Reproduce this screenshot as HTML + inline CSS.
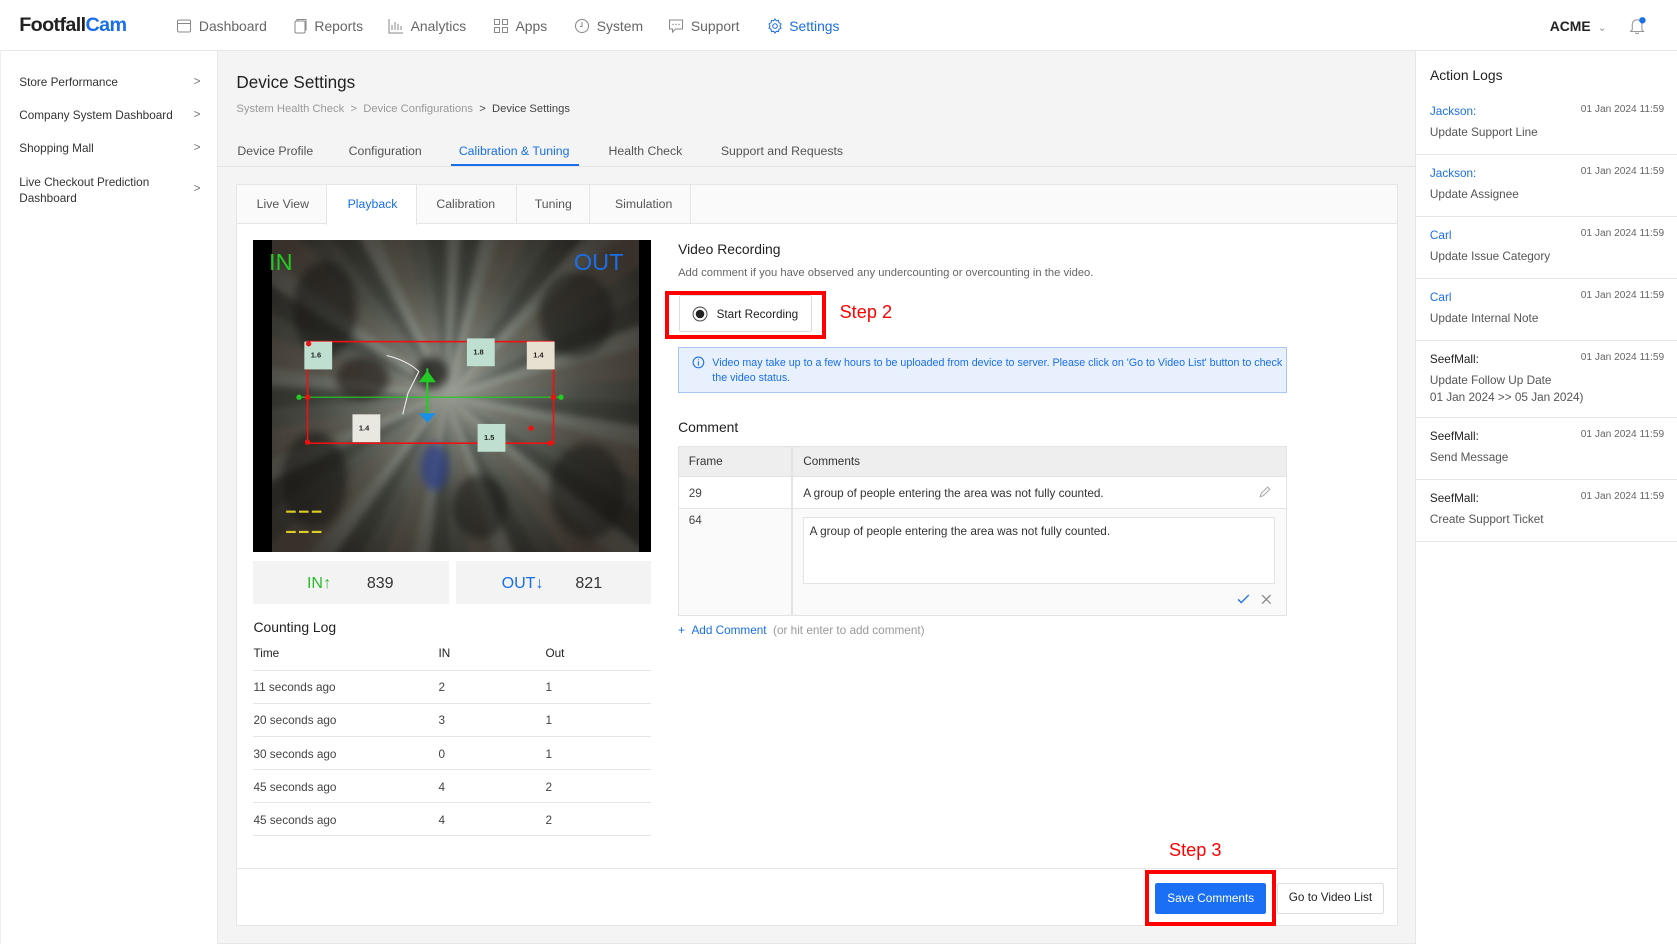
<!DOCTYPE html>
<html><head><meta charset="utf-8"><style>
*{box-sizing:border-box;margin:0;padding:0}
html,body{width:1677px;height:944px;overflow:hidden;background:#fff}
#r{zoom:1.06952;position:relative;width:1568px;height:883px;font-family:"Liberation Sans",sans-serif;color:#333;font-size:11px;overflow:hidden}
.a{position:absolute;white-space:nowrap}
.nav{top:17px;font-size:13px;color:#666;display:flex;align-items:center;gap:6px}
.nav svg{width:15px;height:15px}
.blue{color:#1a6fe8}
.side{left:18px;font-size:11px;color:#333}
.chev{left:181px;color:#777;font-size:11px}
.log{left:1324px;width:244px;height:58px;border-bottom:1px solid #e6e6e6}
.log .n{position:absolute;left:13px;top:11px;font-size:11px;color:#1a6fe8}
.log .d{position:absolute;right:12px;top:10px;font-size:9.5px;color:#666}
.log .t{position:absolute;left:13px;top:29px;font-size:11px;color:#555;line-height:16px}
.row{left:237px;width:372px;height:31px;border-bottom:1px solid #e5e5e5;font-size:11px;color:#444}
.row span{position:absolute;top:10px}
.b{position:absolute;border-radius:50%;filter:blur(4px)}
</style></head><body><div id="r">
<div class="a" style="left:0;top:0;width:1568px;height:48px;border-bottom:1px solid #e8e8e8;background:#fff"></div>
<div class="a" style="left:18px;top:13px;font-size:18.5px;font-weight:bold;letter-spacing:-0.6px;color:#222">Footfall<span style="color:#1a6fe8">Cam</span></div>
<div class="a nav" style="left:165px"><svg viewBox="0 0 16 16"><rect x="1.5" y="2" width="13" height="12" rx="1.5" fill="none" stroke="#888"/><line x1="1.5" y1="5.5" x2="14.5" y2="5.5" stroke="#888"/></svg>Dashboard</div>
<div class="a nav" style="left:273px"><svg viewBox="0 0 16 16"><rect x="3" y="3" width="10" height="12" rx="1.5" fill="none" stroke="#888"/><path d="M5 3V1.5h9v11" fill="none" stroke="#888"/></svg>Reports</div>
<div class="a nav" style="left:363px"><svg viewBox="0 0 16 16"><path d="M1 1v14h14M4 12V7M7 12V4M10 12V6M13 12V8" fill="none" stroke="#888"/></svg>Analytics</div>
<div class="a nav" style="left:461px"><svg viewBox="0 0 16 16"><g fill="none" stroke="#888"><rect x="1.5" y="1.5" width="5" height="5"/><rect x="9.5" y="1.5" width="5" height="5"/><rect x="1.5" y="9.5" width="5" height="5"/><rect x="9.5" y="9.5" width="5" height="5"/></g></svg>Apps</div>
<div class="a nav" style="left:537px"><svg viewBox="0 0 16 16"><circle cx="8" cy="8" r="6.5" fill="none" stroke="#888"/><path d="M8 4v4.5H6" fill="none" stroke="#888"/></svg>System</div>
<div class="a nav" style="left:625px"><svg viewBox="0 0 16 16"><path d="M1.5 2h13v9h-7l-3 3v-3h-3z" fill="none" stroke="#888"/><circle cx="5" cy="6.5" r=".7" fill="#888"/><circle cx="8" cy="6.5" r=".7" fill="#888"/><circle cx="11" cy="6.5" r=".7" fill="#888"/></svg>Support</div>
<div class="a nav blue" style="left:717px;color:#1a6fe8"><svg viewBox="0 0 16 16"><circle cx="8" cy="8" r="2.3" fill="none" stroke="#1a6fe8"/><path d="M8 1l1.3 1.8 2.2-.4.4 2.2L14 6l-1 2 1 2-2.1 1.4-.4 2.2-2.2-.4L8 15l-1.3-1.8-2.2.4-.4-2.2L2 10l1-2-1-2 2.1-1.4.4-2.2 2.2.4z" fill="none" stroke="#1a6fe8"/></svg>Settings</div>
<div class="a" style="left:1449px;top:17px;font-size:13px;font-weight:bold;color:#222">ACME <span style="font-weight:normal;color:#999;font-size:10px;margin-left:3px">&#8964;</span></div>
<svg class="a" style="left:1522px;top:15px" width="18" height="18" viewBox="0 0 18 18"><path d="M4 13V8a4.5 4.5 0 019 0v5l1.5 1.5h-12z M7 15.5a1.6 1.6 0 003 0" fill="none" stroke="#999"/><circle cx="13.5" cy="4" r="3" fill="#1a6fe8"/></svg>
<div class="a" style="left:0;top:48px;width:204px;height:835px;border-right:1px solid #e8e8e8;border-left:1px solid #eee"></div>
<div class="a side" style="top:71px">Store Performance</div><div class="a chev" style="top:70px">&gt;</div>
<div class="a side" style="top:102px">Company System Dashboard</div><div class="a chev" style="top:101px">&gt;</div>
<div class="a side" style="top:133px">Shopping Mall</div><div class="a chev" style="top:132px">&gt;</div>
<div class="a side" style="top:164px;line-height:15px">Live Checkout Prediction<br>Dashboard</div><div class="a chev" style="top:170px">&gt;</div>
<div class="a" style="left:204px;top:48px;width:1119px;height:835px;background:#f4f4f4;border-bottom:1px solid #e6e6e6"></div>
<div class="a" style="left:221px;top:68px;font-size:16px;color:#222">Device Settings</div>
<div class="a" style="left:221px;top:96px;font-size:10.5px;color:#999">System Health Check &nbsp;&gt;&nbsp; Device Configurations &nbsp;<span style="color:#444">&gt;&nbsp; Device Settings</span></div>
<div class="a" style="left:204px;top:155px;width:1119px;border-bottom:1px solid #e3e3e3"></div>
<div class="a" style="left:222px;top:135px;font-size:11.5px;color:#555">Device Profile</div>
<div class="a" style="left:326px;top:135px;font-size:11.5px;color:#555">Configuration</div>
<div class="a" style="left:429px;top:135px;font-size:11.5px;color:#1a6fe8">Calibration &amp; Tuning</div>
<div class="a" style="left:422px;top:153px;width:119px;height:2px;background:#1a6fe8"></div>
<div class="a" style="left:569px;top:135px;font-size:11.5px;color:#555">Health Check</div>
<div class="a" style="left:674px;top:135px;font-size:11.5px;color:#555">Support and Requests</div>
<div class="a" style="left:221px;top:172px;width:1086px;height:694px;background:#fff;border:1px solid #e6e6e6"></div>
<div class="a" style="left:222px;top:173px;width:1084px;height:36px;background:#fafafa;border-bottom:1px solid #e6e6e6"></div>
<div class="a" style="left:305px;top:173px;width:85px;height:37px;background:#fff;border-left:1px solid #e6e6e6;border-right:1px solid #e6e6e6"></div>
<div class="a" style="left:482px;top:173px;width:1px;height:36px;background:#e6e6e6"></div>
<div class="a" style="left:551px;top:173px;width:1px;height:36px;background:#e6e6e6"></div>
<div class="a" style="left:645px;top:173px;width:1px;height:36px;background:#e6e6e6"></div>
<div class="a" style="left:240px;top:184px;font-size:11.5px;color:#555">Live View</div>
<div class="a" style="left:325px;top:184px;font-size:11.5px;color:#1a6fe8">Playback</div>
<div class="a" style="left:408px;top:184px;font-size:11.5px;color:#555">Calibration</div>
<div class="a" style="left:500px;top:184px;font-size:11.5px;color:#555">Tuning</div>
<div class="a" style="left:575px;top:184px;font-size:11.5px;color:#555">Simulation</div>
<div class="a" style="left:237px;top:224px;width:372px;height:292px;background:#000"></div>
<div class="a" style="left:254px;top:224px;width:343px;height:292px;background:radial-gradient(ellipse at 48% 48%,#b8beb4 0%,#838a80 22%,#55584f 50%,#35322c 85%);overflow:hidden">
<div style="position:absolute;inset:-20px;filter:blur(3px);background:repeating-conic-gradient(from 5deg at 48% 50%,rgba(0,0,0,.3) 0 7deg,rgba(255,255,255,.05) 7deg 13deg,rgba(70,50,40,.25) 13deg 22deg,rgba(0,0,0,.15) 22deg 29deg)"></div>
<div class="b" style="left:20px;top:20px;width:60px;height:90px;background:rgba(20,18,16,.55)"></div>
<div class="b" style="left:250px;top:30px;width:70px;height:80px;background:rgba(20,18,16,.5)"></div>
<div class="b" style="left:10px;top:180px;width:60px;height:90px;background:rgba(20,18,16,.55)"></div>
<div class="b" style="left:260px;top:190px;width:70px;height:90px;background:rgba(20,18,16,.5)"></div>
<div class="b" style="left:135px;top:110px;width:30px;height:30px;background:rgba(20,18,16,.7)"></div>
<div class="b" style="left:60px;top:110px;width:50px;height:40px;background:rgba(30,22,18,.6)"></div>
<div class="b" style="left:140px;top:190px;width:25px;height:45px;background:rgba(40,60,140,.7)"></div>
<div class="b" style="left:170px;top:220px;width:50px;height:60px;background:rgba(20,18,16,.5)"></div>
</div>
<svg class="a" style="left:237px;top:224px" width="372" height="292" viewBox="0 0 372 292">
<text x="15" y="28" font-size="22" fill="#2c2" font-family="Liberation Sans">IN</text>
<text x="300" y="28" font-size="22" fill="#1a6fe8" font-family="Liberation Sans">OUT</text>
<rect x="51" y="95" width="230" height="95" fill="none" stroke="#e11" stroke-width="1.5"/>
<line x1="42" y1="147" x2="290" y2="147" stroke="#2c2"/>
<line x1="163" y1="120" x2="163" y2="170" stroke="#2c2" stroke-width="2"/>
<path d="M155 133l8-11 8 11z" fill="#2c2"/><path d="M155 162l8 9 8-9z" fill="#1a8fe8"/>
<g font-size="7" font-family="Liberation Sans" font-weight="bold" fill="#222">
<rect x="48" y="95" width="26" height="26" fill="#bfe0d0"/><text x="54" y="110">1.6</text>
<rect x="200" y="92" width="26" height="26" fill="#bfe0d0"/><text x="206" y="107">1.8</text>
<rect x="256" y="95" width="26" height="26" fill="#e8e0d0"/><text x="262" y="110">1.4</text>
<rect x="93" y="163" width="26" height="26" fill="#e8e8e0"/><text x="99" y="178">1.4</text>
<rect x="210" y="172" width="26" height="26" fill="#bfe0d0"/><text x="216" y="187">1.5</text></g>
<g fill="#e11"><circle cx="51" cy="147" r="2.5"/><circle cx="281" cy="147" r="2.5"/><circle cx="51" cy="189" r="2.5"/><circle cx="278" cy="190" r="2.5"/><circle cx="52" cy="97" r="2.5"/><circle cx="260" cy="176" r="2.5"/></g>
<g fill="#2c2"><circle cx="43" cy="147" r="2.5"/><circle cx="288" cy="147" r="2.5"/></g>
<path d="M125 108q20 5 30 15l-10 20-5 20" fill="none" stroke="#eee"/>
<path d="M31 254h34M31 273h34" stroke="#dc2" stroke-width="2" stroke-dasharray="9 3"/>
</svg>
<div class="a" style="left:237px;top:525px;width:183px;height:40px;background:#f3f3f3"></div>
<div class="a" style="left:426px;top:525px;width:183px;height:40px;background:#f3f3f3"></div>
<div class="a" style="left:287px;top:537px;font-size:15px;color:#2bbb2b">IN&#8593;</div>
<div class="a" style="left:343px;top:537px;font-size:15px;color:#333">839</div>
<div class="a" style="left:469px;top:537px;font-size:15px;color:#1a6fe8">OUT&#8595;</div>
<div class="a" style="left:538px;top:537px;font-size:15px;color:#333">821</div>
<div class="a" style="left:237px;top:579px;font-size:13px;color:#222">Counting Log</div>
<div class="a row" style="top:596px;height:31px"><span style="left:0;top:9px;color:#222">Time</span><span style="left:173px;top:9px;color:#222">IN</span><span style="left:273px;top:9px;color:#222">Out</span></div>
<div class="a row" style="top:627px"><span style="left:0">11 seconds ago</span><span style="left:173px">2</span><span style="left:273px">1</span></div>
<div class="a row" style="top:658px"><span style="left:0">20 seconds ago</span><span style="left:173px">3</span><span style="left:273px">1</span></div>
<div class="a row" style="top:689px"><span style="left:0">30 seconds ago</span><span style="left:173px">0</span><span style="left:273px">1</span></div>
<div class="a row" style="top:720px"><span style="left:0">45 seconds ago</span><span style="left:173px">4</span><span style="left:273px">2</span></div>
<div class="a row" style="top:751px"><span style="left:0">45 seconds ago</span><span style="left:173px">4</span><span style="left:273px">2</span></div>
<div class="a" style="left:634px;top:225px;font-size:13px;color:#222">Video Recording</div>
<div class="a" style="left:634px;top:250px;font-size:10.5px;color:#666">Add comment if you have observed any undercounting or overcounting in the video.</div>
<div class="a" style="left:635px;top:276px;width:124px;height:34px;border:1px solid #ddd;border-radius:2px;background:#fff"></div>
<svg class="a" style="left:647px;top:286px" width="15" height="15"><circle cx="7.5" cy="7.5" r="6.5" fill="none" stroke="#555"/><circle cx="7.5" cy="7.5" r="4" fill="#222"/></svg>
<div class="a" style="left:670px;top:288px;font-size:11px;color:#222">Start Recording</div>
<div class="a" style="left:622px;top:272px;width:150px;height:45px;border:4px solid #f00"></div>
<div class="a" style="left:785px;top:282px;font-size:17px;color:#f00">Step 2</div>
<div class="a" style="left:634px;top:324px;width:569px;height:43px;background:#e8f0fd;border:1px solid #a8c6f5"></div>
<svg class="a" style="left:647px;top:333px" width="12" height="12"><circle cx="6" cy="6" r="5" fill="none" stroke="#1a6fe8"/><path d="M6 5v4M6 3v1" stroke="#1a6fe8"/></svg>
<div class="a" style="left:666px;top:333px;font-size:10px;color:#1a6fe8;line-height:14px">Video may take up to a few hours to be uploaded from device to server. Please click on 'Go to Video List' button to check<br>the video status.</div>
<div class="a" style="left:634px;top:392px;font-size:13px;color:#222">Comment</div>
<div class="a" style="left:634px;top:417px;width:569px;height:159px;border:1px solid #e3e3e3;background:#fafafa"></div>
<div class="a" style="left:635px;top:418px;width:567px;height:28px;background:#eee;border-bottom:1px solid #e3e3e3"></div>
<div class="a" style="left:635px;top:446px;width:567px;height:30px;background:#fff;border-bottom:1px solid #e3e3e3"></div>
<div class="a" style="left:740px;top:418px;width:1px;height:157px;background:#e3e3e3"></div>
<div class="a" style="left:644px;top:425px;font-size:11px;color:#333">Frame</div>
<div class="a" style="left:751px;top:425px;font-size:11px;color:#333">Comments</div>
<div class="a" style="left:644px;top:455px;font-size:11px;color:#444">29</div>
<div class="a" style="left:751px;top:455px;font-size:11px;color:#333">A group of people entering the area was not fully counted.</div>
<svg class="a" style="left:1176px;top:454px" width="12" height="12"><path d="M2 10l1-3 6-6 2 2-6 6z" fill="none" stroke="#aaa"/></svg>
<div class="a" style="left:644px;top:481px;font-size:11px;color:#444">64</div>
<div class="a" style="left:751px;top:483px;width:441px;height:63px;border:1px solid #e3e3e3;background:#fff"></div>
<div class="a" style="left:757px;top:491px;font-size:11px;color:#333">A group of people entering the area was not fully counted.</div>
<svg class="a" style="left:1157px;top:555px" width="12" height="10"><path d="M1 5l3 3 7-7" fill="none" stroke="#1a6fe8" stroke-width="1.3"/></svg>
<svg class="a" style="left:1179px;top:555px" width="10" height="10"><path d="M1 1l8 8M9 1l-8 8" stroke="#888" stroke-width="1.2"/></svg>
<div class="a" style="left:634px;top:583px;font-size:11px;color:#1a6fe8">+ &nbsp;Add Comment <span style="color:#999;margin-left:3px">(or hit enter to add comment)</span></div>
<div class="a" style="left:222px;top:812px;width:1084px;border-top:1px solid #e6e6e6"></div>
<div class="a" style="left:1093px;top:785px;font-size:17px;color:#f00">Step 3</div>
<div class="a" style="left:1080px;top:826px;width:104px;height:29px;background:#1a6ff5;border-radius:2px;color:#fff;font-size:11px;text-align:center;line-height:29px">Save Comments</div>
<div class="a" style="left:1071px;top:813px;width:122px;height:53px;border:4px solid #f00"></div>
<div class="a" style="left:1194px;top:826px;width:100px;height:29px;border:1px solid #ddd;border-radius:2px;color:#222;font-size:11px;text-align:center;line-height:27px">Go to Video List</div>
<div class="a" style="left:1323px;top:48px;width:245px;height:835px;background:#fff;border-left:1px solid #e6e6e6"></div>
<div class="a" style="left:1337px;top:63px;font-size:13px;color:#222">Action Logs</div>
<div class="a log" style="top:87px"><span class="n">Jackson:</span><span class="d">01 Jan 2024 11:59</span><span class="t">Update Support Line</span></div>
<div class="a log" style="top:145px"><span class="n">Jackson:</span><span class="d">01 Jan 2024 11:59</span><span class="t">Update Assignee</span></div>
<div class="a log" style="top:203px"><span class="n">Carl</span><span class="d">01 Jan 2024 11:59</span><span class="t">Update Issue Category</span></div>
<div class="a log" style="top:261px"><span class="n">Carl</span><span class="d">01 Jan 2024 11:59</span><span class="t">Update Internal Note</span></div>
<div class="a log" style="top:319px;height:72px"><span class="n" style="color:#222">SeefMall:</span><span class="d">01 Jan 2024 11:59</span><span class="t">Update Follow Up Date<br>01 Jan 2024 &gt;&gt; 05 Jan 2024)</span></div>
<div class="a log" style="top:391px"><span class="n" style="color:#222">SeefMall:</span><span class="d">01 Jan 2024 11:59</span><span class="t">Send Message</span></div>
<div class="a log" style="top:449px"><span class="n" style="color:#222">SeefMall:</span><span class="d">01 Jan 2024 11:59</span><span class="t">Create Support Ticket</span></div>
</div></body></html>
